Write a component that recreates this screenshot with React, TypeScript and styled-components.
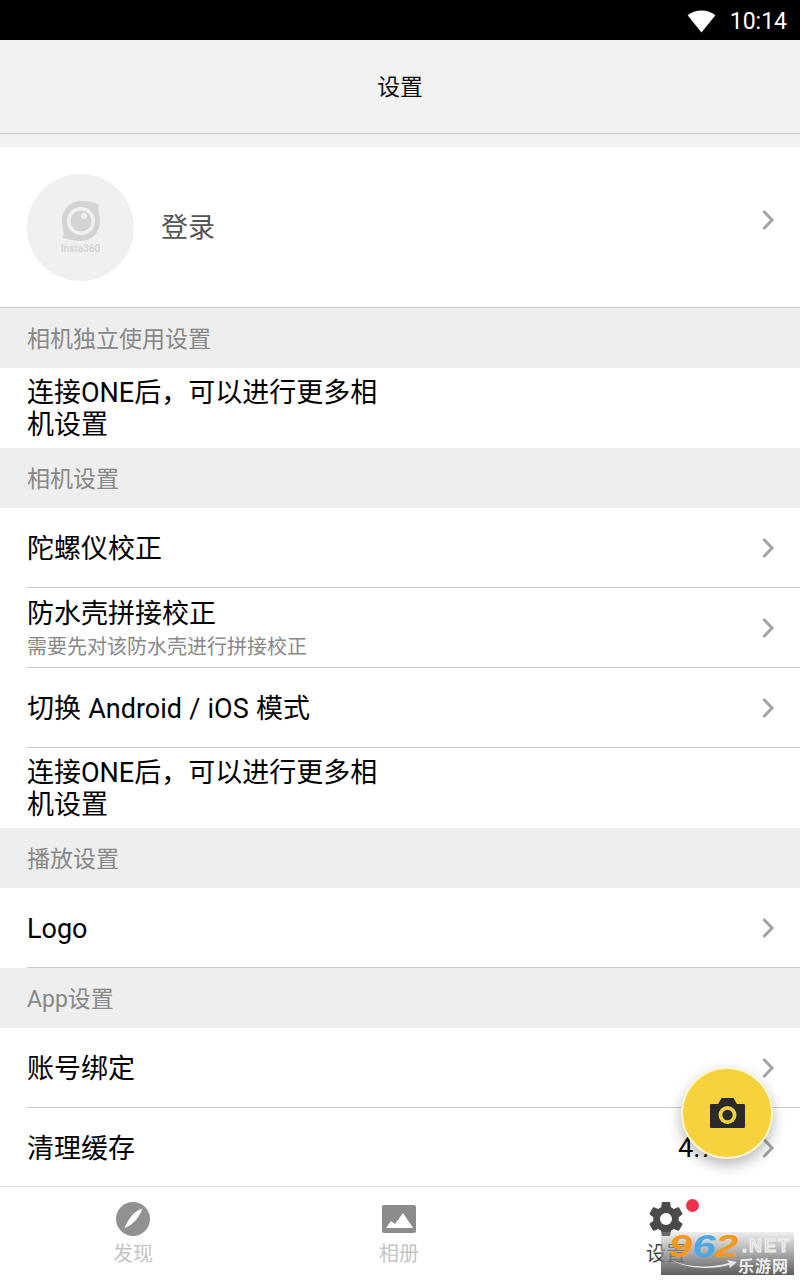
import React from "react";
import styled, { createGlobalStyle } from "styled-components";

const Global = createGlobalStyle`
  html, body { margin: 0; padding: 0; background: #fff; }
  body { font-family: Roboto, "Noto Sans CJK SC", sans-serif; }
  * { box-sizing: border-box; }
`;

const Page = styled.div`
  position: relative;
  width: 800px;
  height: 1280px;
  overflow: hidden;
  display: flex;
  flex-direction: column;
  background: #fff;
`;

const StatusBar = styled.div`
  height: 40px;
  background: #000;
  color: #fff;
  display: flex;
  align-items: center;
  justify-content: flex-end;
  padding: 2px 13px 0 0;
  gap: 14px;
  font-size: 23px;
  flex: none;
`;

const Header = styled.div`
  height: 94px;
  background: #f2f2f2;
  border-bottom: 1px solid #ccc;
  display: flex;
  align-items: center;
  justify-content: center;
  padding-bottom: 4px;
  font-size: 22.86px;
  color: #111;
  flex: none;
`;

const Spacer = styled.div`
  height: 13px;
  background: #f2f2f2;
  flex: none;
`;

const LoginRow = styled.div`
  height: 161px;
  border-bottom: 1px solid #ccc;
  display: flex;
  align-items: center;
  padding: 0 25px 0 27px;
  flex: none;
`;

const Avatar = styled.div`
  width: 107px;
  height: 107px;
  border-radius: 50%;
  background: #f0f0f0;
  display: flex;
  flex-direction: column;
  align-items: center;
  justify-content: center;
  flex: none;
  margin-right: 27px;
`;

const LogoText = styled.span`
  font-size: 10px;
  line-height: 10px;
  font-weight: 700;
  color: #d5d5d5;
  margin-top: 2px;
`;

const LoginLabel = styled.span`
  font-size: 27px;
  color: #555;
  flex: 1;
  padding-bottom: 4px;
`;

const Section = styled.div`
  height: 60px;
  background: #eee;
  color: #888;
  font-size: 23px;
  display: flex;
  align-items: center;
  padding: 0 0 2px 27px;
  flex: none;
`;

const Notice = styled.div`
  height: 80px;
  display: flex;
  align-items: center;
  padding: 2px 0 0 27px;
  flex: none;
`;

const NoticeText = styled.div`
  width: 356px;
  font-size: 27px;
  line-height: 32px;
  color: #000;
`;

const Row = styled.div<{ $plain?: boolean }>`
  height: 80px;
  margin-left: 27px;
  padding-right: 25px;
  display: flex;
  align-items: center;
  border-bottom: ${(p) => (p.$plain ? "none" : "1px solid #ccc")};
  flex: none;
`;

const RowBody = styled.div`
  flex: 1;
  display: flex;
  flex-direction: column;
  padding-top: 2px;
`;

const RowTitle = styled.span`
  font-size: 27px;
  line-height: 32px;
  color: #000;
  word-spacing: 0.5px;
`;

const RowSub = styled.span`
  font-size: 20px;
  line-height: 24px;
  margin-top: 5px;
  color: #888;
`;

const RowValue = styled.span`
  font-size: 27px;
  color: #000;
  margin-right: 22px;
`;

const ChevronWrap = styled.span<{ $raised?: boolean }>`
  display: flex;
  margin-bottom: ${(p) => (p.$raised ? "14px" : "0")};
`;

const TabBar = styled.div`
  position: absolute;
  left: 0;
  right: 0;
  bottom: 0;
  height: 94px;
  background: #fff;
  border-top: 1px solid #ddd;
  display: grid;
  grid-template-columns: 266px 266px 268px;
`;

const Tab = styled.div`
  position: relative;
  display: flex;
  flex-direction: column;
  align-items: center;
  padding-top: 15px;
`;

const TabLabel = styled.span<{ $active?: boolean }>`
  font-size: 20px;
  line-height: 24px;
  margin-top: 6px;
  color: ${(p) => (p.$active ? "#444" : "#c4c4c4")};
`;

const Badge = styled.span`
  position: absolute;
  top: 12px;
  left: 154px;
  width: 13px;
  height: 13px;
  border-radius: 50%;
  background: #f4304a;
`;

const Fab = styled.div`
  position: absolute;
  left: 681px;
  top: 1067px;
  width: 92px;
  height: 92px;
  border-radius: 50%;
  background: #f6d23c;
  border: 2px solid #fdf6d0;
  box-shadow: 0 6px 14px rgba(0, 0, 0, 0.28);
  display: flex;
  align-items: center;
  justify-content: center;
`;

const Mark = styled.div`
  position: absolute;
  left: 661px;
  top: 1232px;
  width: 133px;
  height: 43px;
  background: linear-gradient(180deg, rgba(190,190,190,0.25), rgba(150,150,150,0.75) 45%, rgba(85,85,85,0.95));
  font-family: "Liberation Sans", sans-serif;
`;

const MarkNum = styled.div`
  position: absolute;
  left: 8px;
  top: -1px;
  display: flex;
  font-size: 32px;
  line-height: 30px;
  font-weight: 700;
  font-style: italic;
  transform: scaleX(1.3);
  transform-origin: left top;
`;

const Digit = styled.span<{ $c: string }>`
  color: ${(p) => p.$c};
`;

const MarkNet = styled.span`
  position: absolute;
  left: 81px;
  top: 5px;
  font-size: 18px;
  line-height: 18px;
  font-weight: 700;
  color: #d8d8d8;
  -webkit-text-stroke: 1px #f2f2f2;
  letter-spacing: 2px;
  white-space: nowrap;
`;

const MarkCn = styled.span`
  position: absolute;
  left: 77px;
  top: 24px;
  font-family: "Noto Sans CJK SC", sans-serif;
  font-size: 16px;
  line-height: 18px;
  font-weight: 700;
  color: #eee;
  letter-spacing: 1px;
  white-space: nowrap;
`;

const Swoosh = styled.svg`
  position: absolute;
  left: 10px;
  top: 27px;
`;

const Chevron = ({ raised }: { raised?: boolean }) => (
  <ChevronWrap $raised={raised}>
    <svg width="14" height="22" viewBox="0 0 14 22" fill="none">
      <path d="M2.5 2 L11 11 L2.5 20" stroke="#a3a3a3" strokeWidth="3" />
    </svg>
  </ChevronWrap>
);

const Wifi = () => (
  <svg width="29" height="23" viewBox="0 0 30 24">
    <path d="M15 23.5 L0.5 5.5 C4.5 2.5 9.5 0.5 15 0.5 C20.5 0.5 25.5 2.5 29.5 5.5 Z" fill="#fff" />
  </svg>
);

const LogoMark = () => (
  <svg width="40" height="42" viewBox="0 0 40 42">
    <path
      d="M20 1 C27 1 33 2 38 5 C36 9 39 14 39 21 C39 32 31 41 20 41 C14 41 8 40 2 38 C4 33 1 28 1 21 C1 10 9 1 20 1 Z"
      fill="#d3d3d3"
    />
    <circle cx="20" cy="21" r="14" fill="#f0f0f0" />
    <circle cx="20" cy="21" r="10.5" fill="#d3d3d3" />
    <circle cx="23" cy="16" r="3" fill="#f0f0f0" />
  </svg>
);

const Compass = () => (
  <svg width="34" height="34" viewBox="0 0 34 34">
    <circle cx="17" cy="17" r="17" fill="#919191" />
    <path d="M26.5 6.5 C19 9 13 15 8.5 26 C16 23 23 17 26.5 6.5 Z" fill="#fff" />
  </svg>
);

const Picture = () => (
  <svg width="34" height="28" viewBox="0 0 34 28" style={{ marginTop: 3, marginBottom: 3 }}>
    <rect width="34" height="28" rx="2" fill="#8c8c8c" />
    <path d="M4 23 L9 16 L13 19 L21 8 L31 23 Z" fill="#fff" />
  </svg>
);

const Gear = () => (
  <svg width="34" height="34" viewBox="2 2 20 20">
    <path
      fill="#4a4a4a"
      d="M19.43 12.98c.04-.32.07-.64.07-.98s-.03-.66-.07-.98l2.11-1.65c.19-.15.24-.42.12-.64l-2-3.46c-.12-.22-.39-.3-.61-.22l-2.49 1c-.52-.4-1.08-.73-1.69-.98l-.38-2.65C14.46 2.18 14.25 2 14 2h-4c-.25 0-.46.18-.49.42l-.38 2.65c-.61.25-1.17.59-1.69.98l-2.49-1c-.23-.09-.49 0-.61.22l-2 3.46c-.13.22-.07.49.12.64l2.11 1.65c-.04.32-.07.65-.07.98s.03.66.07.98l-2.11 1.65c-.19.15-.24.42-.12.64l2 3.46c.12.22.39.3.61.22l2.49-1c.52.4 1.08.73 1.69.98l.38 2.65c.03.24.24.42.49.42h4c.25 0 .46-.18.49-.42l.38-2.65c.61-.25 1.17-.59 1.69-.98l2.49 1c.23.09.49 0 .61-.22l2-3.46c.12-.22.07-.49-.12-.64l-2.11-1.65zM12 15.5c-1.93 0-3.5-1.57-3.5-3.5s1.57-3.5 3.5-3.5 3.5 1.57 3.5 3.5-1.57 3.5-3.5 3.5z"
    />
  </svg>
);

const Camera = () => (
  <svg width="35" height="30" viewBox="0 0 35 30">
    <path
      d="M0 7 a1 1 0 0 1 1-1 h7 l3-5 a1 1 0 0 1 1-1 h11 a1 1 0 0 1 1 1 l3 5 h7 a1 1 0 0 1 1 1 v22 a1 1 0 0 1-1 1 H1 a1 1 0 0 1-1-1 Z"
      fill="#2b2b2b"
    />
    <circle cx="17.5" cy="17" r="9" fill="#f6d23c" />
    <circle cx="17.5" cy="17" r="5.2" fill="#2b2b2b" />
  </svg>
);

export default function App() {
  return (
    <Page>
      <Global />
      <StatusBar>
        <Wifi />
        <span>10:14</span>
      </StatusBar>
      <Header>设置</Header>
      <Spacer />
      <LoginRow>
        <Avatar>
          <LogoMark />
          <LogoText>Insta360</LogoText>
        </Avatar>
        <LoginLabel>登录</LoginLabel>
        <Chevron raised />
      </LoginRow>
      <Section>相机独立使用设置</Section>
      <Notice>
        <NoticeText>连接ONE后，可以进行更多相机设置</NoticeText>
      </Notice>
      <Section>相机设置</Section>
      <Row>
        <RowBody><RowTitle>陀螺仪校正</RowTitle></RowBody>
        <Chevron />
      </Row>
      <Row>
        <RowBody>
          <RowTitle>防水壳拼接校正</RowTitle>
          <RowSub>需要先对该防水壳进行拼接校正</RowSub>
        </RowBody>
        <Chevron />
      </Row>
      <Row>
        <RowBody><RowTitle>切换 Android / iOS 模式</RowTitle></RowBody>
        <Chevron />
      </Row>
      <Notice>
        <NoticeText>连接ONE后，可以进行更多相机设置</NoticeText>
      </Notice>
      <Section>播放设置</Section>
      <Row>
        <RowBody><RowTitle>Logo</RowTitle></RowBody>
        <Chevron />
      </Row>
      <Section>App设置</Section>
      <Row>
        <RowBody><RowTitle>账号绑定</RowTitle></RowBody>
        <Chevron />
      </Row>
      <Row $plain>
        <RowBody><RowTitle>清理缓存</RowTitle></RowBody>
        <RowValue>4.7M</RowValue>
        <Chevron />
      </Row>
      <TabBar>
        <Tab>
          <Compass />
          <TabLabel>发现</TabLabel>
        </Tab>
        <Tab>
          <Picture />
          <TabLabel>相册</TabLabel>
        </Tab>
        <Tab>
          <Gear />
          <TabLabel $active>设置</TabLabel>
          <Badge />
        </Tab>
      </TabBar>
      <Fab><Camera /></Fab>
      <Mark>
        <Swoosh width="66" height="10" viewBox="0 0 66 10">
          <path d="M0 1 C18 9 40 9 58 4 L56 1 L66 3 L59 9 L58 6 C40 11 16 10 0 1 Z" fill="#e6e6e6" />
        </Swoosh>
        <MarkNum>
          <Digit $c="#f39a1e">9</Digit>
          <Digit $c="#4ea6e2">6</Digit>
          <Digit $c="#f39a1e">2</Digit>
        </MarkNum>
        <MarkNet>.NET</MarkNet>
        <MarkCn>乐游网</MarkCn>
      </Mark>
    </Page>
  );
}
